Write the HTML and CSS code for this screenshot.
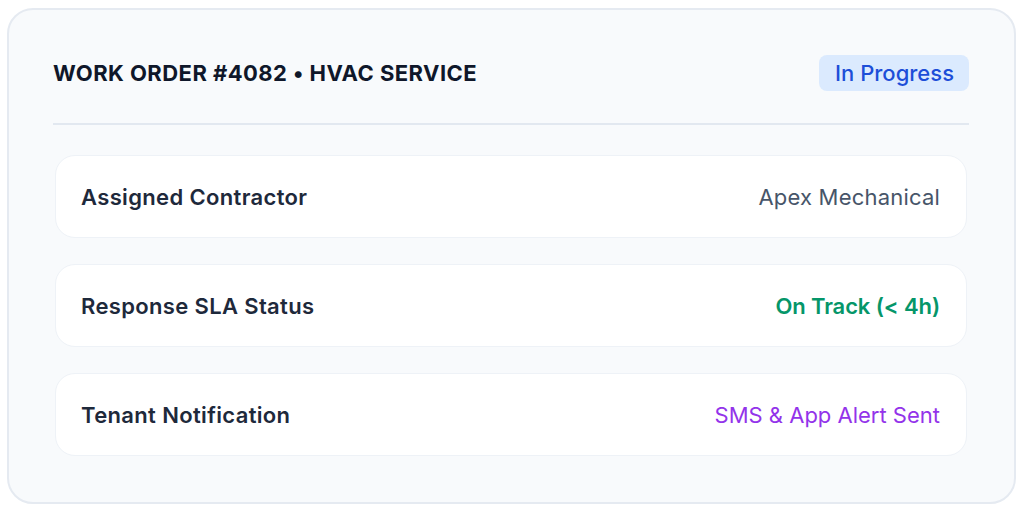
FILE: index.html
```html
<!DOCTYPE html>
<html>
<head>
<meta charset="utf-8">
<link rel="stylesheet" href="styles.css">
</head>
<body>
<div class="card">
  <div class="header">
    <h1 class="title">WORK ORDER #4082 • HVAC SERVICE</h1>
    <span class="badge">In Progress</span>
  </div>
  <div class="divider"></div>
  <div class="rows">
    <div class="row">
      <span class="label">Assigned Contractor</span>
      <span class="value neutral">Apex Mechanical</span>
    </div>
    <div class="row">
      <span class="label">Response SLA Status</span>
      <span class="value ok">On Track (&lt; 4h)</span>
    </div>
    <div class="row">
      <span class="label">Tenant Notification</span>
      <span class="value notify">SMS &amp; App Alert Sent</span>
    </div>
  </div>
</div>
</body>
</html>
```

FILE: styles.css
```css
* { box-sizing: border-box; }
html, body { margin: 0; background: #ffffff; }
body {
  padding: 8px 8px 8px 7px;
  font-family: Inter, "Noto Sans", sans-serif;
}
.card {
  width: 1009px;
  height: 496px;
  background: #f8fafc;
  border: 2px solid #e5eaf1;
  border-radius: 26px;
  padding: 44px 45px 0 44px;
}
.header {
  display: flex;
  align-items: center;
  justify-content: space-between;
  height: 38px;
}
.title {
  margin: 0;
  font-size: 22px;
  font-weight: 700;
  color: #0f172a;
  letter-spacing: 0.45px;
}
.badge {
  background: #dbeafe;
  color: #1d4ed8;
  font-size: 22px;
  font-weight: 500;
  padding: 5px 15px 5px 16px;
  border-radius: 8px;
  line-height: 26px;
}
.divider {
  height: 2px;
  background: #e2e8f0;
  margin: 31px 0 30px;
}
.rows {
  display: flex;
  flex-direction: column;
  gap: 26px;
  padding: 0 2px 0 2px;
}
.row {
  display: flex;
  align-items: center;
  justify-content: space-between;
  height: 83px;
  background: #ffffff;
  border: 1px solid #eef2f7;
  border-radius: 20px;
  padding: 0 26px 0 25px;
}
.label {
  font-size: 22px;
  font-weight: 600;
  color: #1e293b;
  letter-spacing: 0.35px;
}
.value { font-size: 22px; }
.neutral { color: #475569; font-weight: 400; letter-spacing: 0.2px; }
.ok { color: #059669; font-weight: 600; letter-spacing: -0.1px; }
.notify { color: #9333ea; font-weight: 400; letter-spacing: 0px; }
```
